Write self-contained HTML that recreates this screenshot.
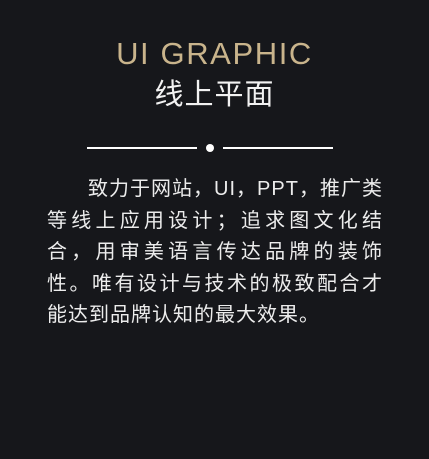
<!DOCTYPE html>
<html><head><meta charset="utf-8"><style>
html,body{margin:0;padding:0;background:#16171b;width:429px;height:459px;overflow:hidden}
body{position:relative;font-family:"Liberation Sans","Noto Sans CJK SC",sans-serif}
.t1{position:absolute;top:37px;left:0;width:429px;text-align:center;color:#c9b48c;font-size:31px;letter-spacing:1.6px;line-height:34px}
.t2{position:absolute;top:77px;left:0;width:429px;text-align:center;color:#f2f2f2;font-size:29px;letter-spacing:1px;line-height:36px}
.ln{position:absolute;top:147px;height:2px;background:#fff}
.dot{position:absolute;top:144px;left:206px;width:8px;height:8px;border-radius:50%;background:#fff}
.p{position:absolute;left:47px;top:174px;width:336px;color:#ececec;font-size:20px;line-height:31.5px;letter-spacing:1px}
.p div{text-align:justify;text-align-last:justify;white-space:nowrap}
.p div.l{text-align-last:left}
</style></head><body>
<div class="t1">UI GRAPHIC</div>
<div class="t2">线上平面</div>
<div class="ln" style="left:87px;width:110px"></div>
<div class="dot"></div>
<div class="ln" style="left:223px;width:110px"></div>
<div class="p">
<div style="padding-left:41px">致力于网站，UI，PPT，推广类</div>
<div>等线上应用设计；追求图文化结</div>
<div>合，用审美语言传达品牌的装饰</div>
<div>性。唯有设计与技术的极致配合才</div>
<div class="l">能达到品牌认知的最大效果。</div>
</div>
</body></html>
